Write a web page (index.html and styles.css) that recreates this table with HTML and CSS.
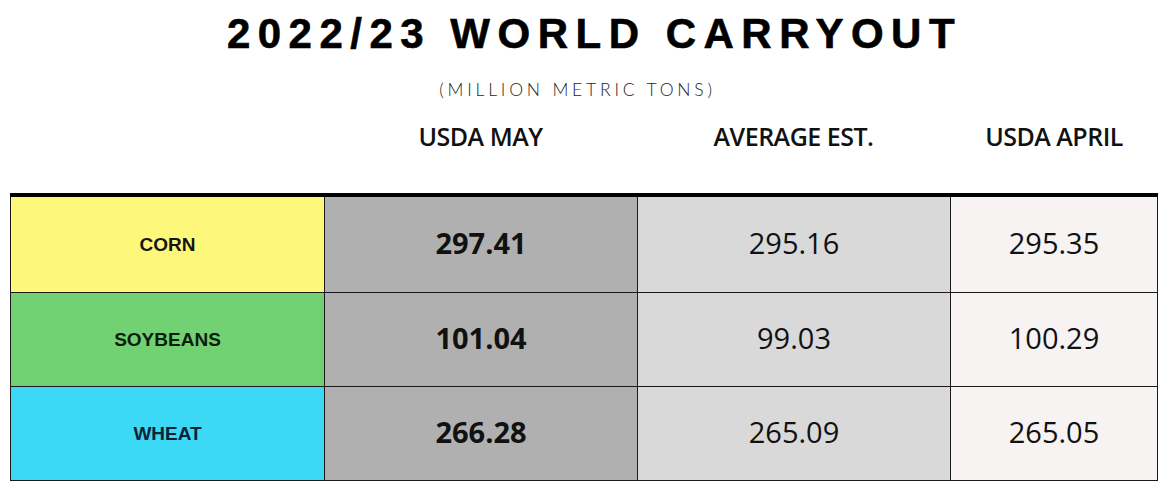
FILE: index.html
```html
<!DOCTYPE html>
<html lang="en">
<head>
<meta charset="utf-8">
<title>2022/23 World Carryout</title>
<link rel="stylesheet" href="styles.css">
</head>
<body>
<div class="page">
  <h1 class="title">2022/23 WORLD CARRYOUT</h1>
  <p class="subtitle">(MILLION METRIC TONS)</p>
  <div class="heads">
    <div></div>
    <div class="head">USDA MAY</div>
    <div class="head">AVERAGE EST.</div>
    <div class="head">USDA APRIL</div>
  </div>
  <div class="table">
    <div class="cell label corn">CORN</div>
    <div class="cell num may">297.41</div>
    <div class="cell num avg">295.16</div>
    <div class="cell num apr">295.35</div>

    <div class="cell label soy">SOYBEANS</div>
    <div class="cell num may">101.04</div>
    <div class="cell num avg">99.03</div>
    <div class="cell num apr">100.29</div>

    <div class="cell label wheat">WHEAT</div>
    <div class="cell num may">266.28</div>
    <div class="cell num avg">265.09</div>
    <div class="cell num apr">265.05</div>
  </div>
</div>
</body>
</html>
```

FILE: styles.css
```css
* { box-sizing: border-box; }
html, body { margin: 0; padding: 0; background: #ffffff; }
.page {
  width: 1175px;
  height: 491px;
  overflow: hidden;
  background: #ffffff;
}
.title {
  margin: 13px 0 0 0;
  padding-left: 14px;
  font-family: "Liberation Sans", Arial, sans-serif;
  font-weight: 700;
  font-size: 42px;
  line-height: 42px;
  letter-spacing: 7.5px;
  text-align: center;
  color: #000;
  -webkit-text-stroke: 0.6px #000;
}
.subtitle {
  margin: 24px 0 0 0;
  padding-right: 20px;
  font-family: Lato, "Open Sans", sans-serif;
  font-weight: 300;
  font-size: 17.5px;
  line-height: 21px;
  letter-spacing: 3.8px;
  text-align: center;
  color: #1e1e1e;
}
.heads {
  display: grid;
  grid-template-columns: 314px 313px 313px 208px;
  margin: 22px 0 0 10px;
  height: 28px;
}
.head {
  font-family: "Open Sans", sans-serif;
  font-weight: 600;
  font-size: 25px;
  line-height: 28px;
  letter-spacing: -0.5px;
  text-align: center;
  color: #111;
}
.table {
  display: grid;
  grid-template-columns: 313px 312px 312px 206px;
  grid-template-rows: 95px 93px 93px;
  gap: 1px;
  width: 1148px;
  margin: 43px 0 0 10px;
  padding: 0 1px 1px 1px;
  border-top: 4px solid #000;
  background: #1a1a1a;
}
.cell {
  display: flex;
  align-items: center;
  justify-content: center;
  font-family: "Open Sans", sans-serif;
  font-size: 29px;
  color: #111;
}
.num { padding-bottom: 5px; }
.label {
  font-family: "Liberation Sans", Arial, sans-serif;
  font-weight: 700;
  font-size: 19px;
  color: #151515;
}
.corn { background: #fdf77a; }
.soy { background: #72d173; color: #0c1d0c; }
.wheat { background: #3bd9f5; color: #0c2236; }
.may { background: #b0b0b0; font-weight: 700; }
.avg { background: #d9d9d9; }
.apr { background: #f6f3f2; }
```
